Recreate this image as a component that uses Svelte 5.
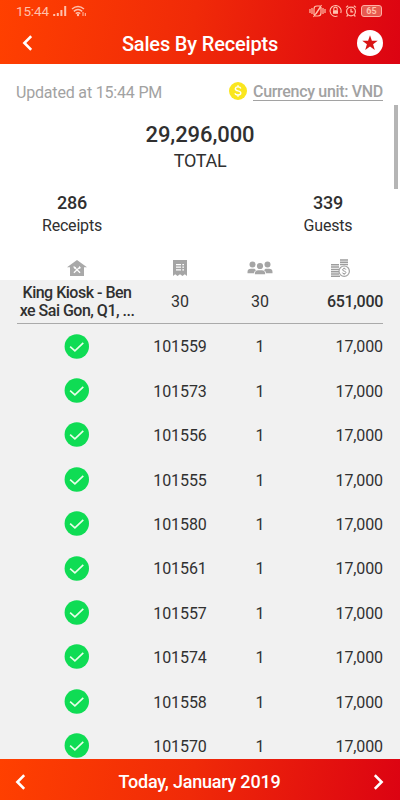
<script lang="ts">
  type Receipt = { code: string; guests: number; amount: string };

  let receipts: Receipt[] = [
    "101559",
    "101573",
    "101556",
    "101555",
    "101580",
    "101561",
    "101557",
    "101574",
    "101558",
    "101570",
  ].map((code) => ({ code, guests: 1, amount: "17,000" }));
</script>

<div class="screen">
  <header>
    <div class="status">
      <span class="time">15:44</span>
      <svg class="signal" width="14" height="12" viewBox="0 0 14 12">
        <path d="M1.2 9v2M4.8 8v3M8.4 5v6M12.2 1v10" stroke="currentColor" stroke-width="2" />
      </svg>
      <svg width="16" height="12" viewBox="0 0 16 12" fill="none" stroke="currentColor">
        <path d="M1 4Q7 -1 13 4M2.8 6.3Q7 2.8 11.2 6.3M4.7 8.5Q7 6.8 9.3 8.5" stroke-width="1.5" />
        <circle cx="7" cy="10" r="1.2" fill="currentColor" stroke="none" />
        <path d="M12 7v4M14.3 8v3" stroke-width="1" />
      </svg>
      <div class="tray">
        <svg width="17" height="14" viewBox="0 0 17 14" fill="none" stroke="currentColor" stroke-width="1.2">
          <path d="M1 5v4M3 4v6M14 4v6M16 5v4" />
          <path d="M5 11V5q0-3 3-3h3M6 12h3q3 0 3-3V3M4.5 13 12.5 1M7 10l4-6" />
        </svg>
        <svg width="13" height="14" viewBox="0 0 13 14" fill="none" stroke="currentColor" stroke-width="1.1">
          <path d="M8.5 12.1A5.5 5.5 0 1 1 11.7 9" />
          <rect x="4" y="6.2" width="5" height="3.6" fill="currentColor" stroke="none" />
          <path d="M4.8 6V4.8a1.7 1.7 0 0 1 3.4 0V6" />
        </svg>
        <svg width="12" height="14" viewBox="0 0 12 14" fill="none" stroke="currentColor" stroke-width="1.2">
          <circle cx="6" cy="7.5" r="4.4" />
          <path d="M6 4.8v3h2.2M1 3.4 3.2 1.7M11 3.4 8.8 1.7M2.8 11.2l-1.2 1.3M9.2 11.2l1.2 1.3" />
        </svg>
        <span class="battery">65</span>
      </div>
    </div>
    <div class="titlebar">
      <svg class="back" width="10" height="16" viewBox="0 0 10 16">
        <path d="M9.2 1.2 2.4 8l6.8 6.8" />
      </svg>
      <h1>Sales By Receipts</h1>
      <svg width="26" height="26" viewBox="0 0 26 26">
        <circle cx="13" cy="13" r="13" fill="#fff" />
        <path d="m13 5.2 1.9 5.5 5.8.1-4.6 3.5 1.7 5.6-4.8-3.4-4.8 3.4 1.7-5.6-4.6-3.5 5.8-.1z" fill="#d91414" />
      </svg>
    </div>
  </header>

  <main>
    <div class="info">
      <span class="updated">Updated at 15:44 PM</span>
      <div class="currency">
        <svg width="18" height="18" viewBox="0 0 18 18">
          <circle cx="9" cy="9" r="9" fill="#fae61e" />
          <path
            d="M11.8 6.5Q11.4 4.9 9 4.9T6.3 6.8Q6.3 8.4 9 8.9T11.8 11Q11.8 13 9 13T6.1 11.3M9 3.3v1.5M9 13v1.7"
            fill="none"
            stroke="#fff"
            stroke-width="1.4"
          />
        </svg>
        <span class="unit">Currency unit: VND</span>
      </div>
    </div>

    <div class="total">
      <strong>29,296,000</strong>
      <span>TOTAL</span>
    </div>

    <div class="summary">
      <div>
        <strong>286</strong>
        <span>Receipts</span>
      </div>
      <div>
        <strong>339</strong>
        <span>Guests</span>
      </div>
    </div>

    <div class="row heading">
      <svg width="20" height="16" viewBox="0 0 20 16">
        <path d="M10 0 20 7.3h-3V16H3V7.3H0z" fill="#a9a9a9" />
        <path d="m6.9 6.9 6.2 5.9M13.1 6.9 6.9 12.8" stroke="#fff" stroke-width="1.3" />
        <path d="m6.2 6.2 3 1.1-1.6 1.6zM12 6l2 2-2 1z" fill="#fff" />
      </svg>
      <svg width="14" height="16" viewBox="0 0 14 16">
        <path d="M0 0h14v16l-2.2-1.7L9.5 16 7 14.3 4.5 16l-2.3-1.7L0 16z" fill="#a5a5a5" />
        <path d="M3 4.6h5M3 7.2h5M3 9.8h5M9.3 4.6H11M9.3 7.2H11M9.3 9.8H11" stroke="#fff" stroke-width="1.3" />
      </svg>
      <svg width="26" height="14" viewBox="0 0 26 14" fill="#a5a5a5">
        <circle cx="5.5" cy="3.5" r="3" />
        <circle cx="20.5" cy="3.5" r="3" />
        <path d="M.5 12.3V11q0-3.2 3.5-3.2h3.5L9 9.2q-2 1-2 3.1zM25.5 12.3V11q0-3.2-3.5-3.2h-3.5L17 9.2q2 1 2 3.1z" />
        <circle cx="13" cy="5" r="3.1" />
        <path d="M7.8 13.2q0-4 3.4-4h3.6q3.4 0 3.4 4z" />
      </svg>
      <svg class="coins" width="20" height="19" viewBox="0 0 20 19">
        <path d="M1 5.8h8M1 8.1h8M1 10.4h8M1 12.7h8M1 15h8M1 17.3h9M10 1h8M10 3.3h8M10 5.6h8" stroke="#9d9d9d" stroke-width="1.5" />
        <circle cx="14.2" cy="12.2" r="5.2" fill="#fff" stroke="#a3a3a3" stroke-width="1.2" />
        <path
          d="M15.9 10.6q-.2-1-1.7-1t-1.7 1.1q0 1 1.7 1.4t1.7 1.4q0 1.2-1.7 1.2t-1.8-1.1M14.2 8.7v1M14.2 14.7v1"
          fill="none"
          stroke="#999"
          stroke-width="1"
        />
      </svg>
    </div>

    <section>
      <div class="row group">
        <span class="store">King Kiosk - Ben<br />xe Sai Gon, Q1, ...</span>
        <span>30</span>
        <span>30</span>
        <strong class="amount">651,000</strong>
      </div>
      {#each receipts as receipt}
        <div class="row receipt">
          <svg width="26" height="25" viewBox="0 0 26 25">
            <circle cx="12.8" cy="12.5" r="12.2" fill="#0fdc54" />
            <path d="m6.1 12.6 4.8 4.2 8.4-7.9" fill="none" stroke="#e8ffe9" stroke-width="1.6" />
          </svg>
          <span>{receipt.code}</span>
          <span>{receipt.guests}</span>
          <span class="amount">{receipt.amount}</span>
        </div>
      {/each}
    </section>
    <div class="scrollbar"></div>
  </main>

  <footer>
    <svg width="10" height="16" viewBox="0 0 10 16">
      <path d="M9.2 1.2 2.4 8l6.8 6.8" />
    </svg>
    <span>Today, January 2019</span>
    <svg width="10" height="16" viewBox="0 0 10 16">
      <path d="M.8 1.2 7.6 8 .8 14.8" />
    </svg>
  </footer>
</div>

<style>
  :global(body) {
    margin: 0;
  }

  .screen {
    width: 400px;
    height: 800px;
    display: flex;
    flex-direction: column;
    overflow: hidden;
    background: #fff;
    color: #303030;
    font-family: Roboto, sans-serif;
    font-size: 16px;
  }

  svg {
    display: block;
    flex: none;
  }

  header,
  footer {
    flex: none;
    box-sizing: border-box;
    background: linear-gradient(100deg, #ff4000 0%, #f02a08 48%, #dc0312 100%);
    color: #fff;
  }

  header {
    height: 64px;
  }

  .status {
    height: 22px;
    display: flex;
    align-items: center;
    padding: 0 18px 0 16px;
    color: #ffc0ac;
  }

  .time {
    font-size: 13.5px;
    letter-spacing: -0.15px;
  }

  .signal {
    margin: 0 4px 0 4px;
  }

  .tray {
    display: flex;
    align-items: center;
    gap: 3px;
    margin-left: auto;
  }

  .battery {
    box-sizing: border-box;
    width: 21px;
    height: 12px;
    margin-left: 1px;
    border: 1px solid #ffb0a5;
    border-radius: 3px;
    background: #e75a50;
    font-size: 9px;
    font-weight: 700;
    line-height: 10px;
    text-align: center;
  }

  .titlebar {
    height: 42px;
    display: flex;
    align-items: center;
    justify-content: space-between;
    padding: 0 17px 0 22px;
    box-sizing: border-box;
  }

  .back {
    margin-right: 11px;
  }

  .back path,
  footer path {
    fill: none;
    stroke: #fff;
    stroke-width: 2.6;
  }

  h1 {
    margin: 0;
    padding-top: 2px;
    font-size: 20px;
    font-weight: 500;
    letter-spacing: -0.17px;
    line-height: 40px;
  }

  main {
    flex: 1;
    min-height: 0;
    overflow: hidden;
    position: relative;
  }

  .info {
    display: flex;
    justify-content: space-between;
    align-items: center;
    height: 20px;
    padding: 18px 17px 0 16px;
    color: #a2a2a2;
  }

  .updated {
    padding-top: 1px;
    letter-spacing: -0.18px;
  }

  .currency {
    display: flex;
    align-items: center;
    gap: 6px;
  }

  .currency svg {
    margin-top: -3px;
  }

  .unit {
    padding-top: 1px;
    border-bottom: 1px solid #a2a2a2;
    font-weight: 500;
    letter-spacing: -0.32px;
    line-height: 16px;
  }

  .total {
    display: flex;
    flex-direction: column;
    align-items: center;
    margin-top: 19px;
    font-size: 18px;
    letter-spacing: -0.3px;
    line-height: 24px;
  }

  .total strong {
    font-size: 22px;
    font-weight: 500;
    letter-spacing: -0.1px;
    line-height: 28px;
  }

  .summary {
    display: flex;
    justify-content: space-between;
    padding: 0 17px;
    margin-top: 18px;
  }

  .summary div {
    width: 110px;
    display: flex;
    flex-direction: column;
    align-items: center;
    letter-spacing: -0.2px;
    line-height: 22px;
  }

  .summary strong {
    font-size: 18px;
    font-weight: 500;
    line-height: 24px;
  }

  .row {
    display: grid;
    grid-template-columns: 120px 86px 74px 1fr;
    align-items: center;
    justify-items: center;
    margin: 0 17px;
    font-size: 16px;
    letter-spacing: -0.1px;
  }

  .heading {
    height: 24px;
    margin-top: 19px;
  }

  .coins {
    justify-self: end;
    margin-right: 33px;
  }

  section {
    background: #f1f1f1;
  }

  .group {
    height: 43px;
    border-bottom: 1px solid #aaa;
  }

  .store {
    padding-top: 1px;
    font-weight: 500;
    letter-spacing: -0.5px;
    line-height: 18px;
    text-align: center;
    white-space: nowrap;
  }

  .amount {
    justify-self: end;
    font-weight: 400;
  }

  .group .amount {
    font-weight: 500;
    letter-spacing: -0.3px;
  }

  .receipt {
    height: 44.4px;
  }

  .receipt span {
    padding-top: 1.6px;
  }

  .scrollbar {
    position: absolute;
    top: 41px;
    right: 2px;
    width: 4px;
    height: 84px;
    background: #b5b5b5;
  }

  footer {
    height: 41px;
    display: flex;
    align-items: center;
    justify-content: space-between;
    padding: 4px 16px 0 15px;
    font-size: 18px;
    font-weight: 500;
    letter-spacing: -0.22px;
  }
</style>
